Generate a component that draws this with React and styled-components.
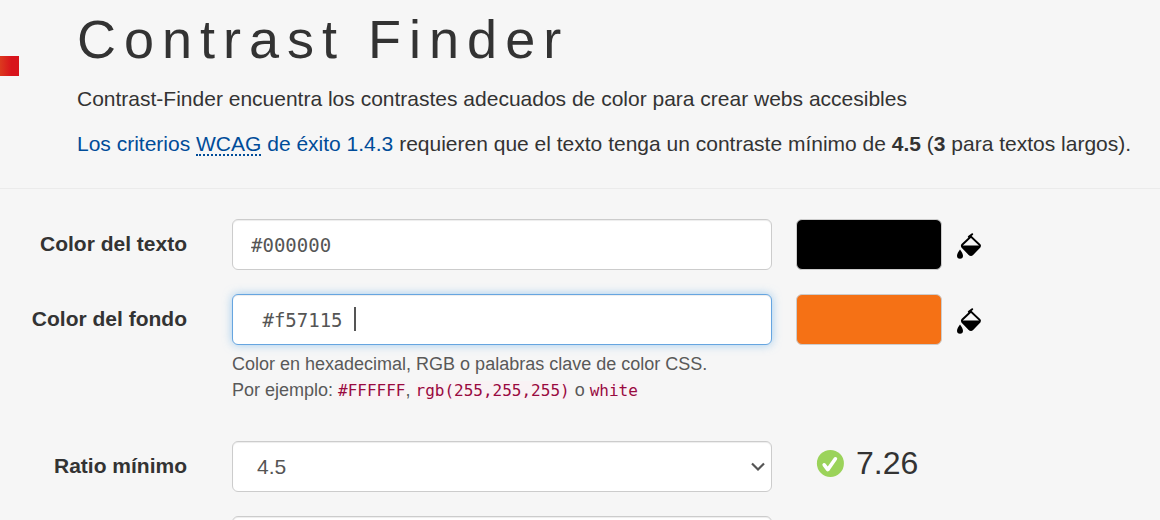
import React, { useState } from "react";
import styled, { createGlobalStyle, css } from "styled-components";

const GlobalStyle = createGlobalStyle`
  *, *::before, *::after { box-sizing: border-box; }
  html { scrollbar-width: none; }
  body {
    margin: 0;
    background: #f6f6f6;
    color: #333;
    font: 21px/30px "Liberation Sans", Arial, sans-serif;
  }
`;

const Header = styled.header`
  display: flex;
  align-items: flex-start;
  gap: 58px;
  padding-bottom: 29px;
  border-bottom: 1px solid #ebebeb;
`;

const LogoEdge = styled.div`
  flex: 0 0 19px;
  height: 20px;
  margin-top: 56px;
  background: linear-gradient(90deg, #dc3a1e, #d8141c 60%);
`;

const Intro = styled.div`
  flex: 1;
  min-width: 0;
`;

const Title = styled.h1`
  margin: 8px 0 14px;
  font-size: 54px;
  line-height: 62px;
  font-weight: 400;
  letter-spacing: 8px;
`;

const Lead = styled.p`
  margin: 0 0 15px;

  &:last-child { margin-bottom: 0; }
`;

const CriteriaLink = styled.a`
  color: #004c99;
  text-decoration: none;
`;

const Abbr = styled.abbr`
  display: inline-block;
  line-height: 20px;
  text-decoration: none;
  border-bottom: 2px dotted #004c99;
`;

const Form = styled.form`
  display: grid;
  gap: 24px;
  padding: 30px 0 24px;
`;

const Row = styled.div`
  display: grid;
  grid-template-columns: 232fr 540fr 388fr;
  align-items: start;
`;

const Label = styled.label`
  padding: 10px 45px 0 0;
  text-align: right;
  font-weight: 700;
`;

const Field = styled.div`
  position: relative;
  grid-column: 2;
`;

const control = css`
  display: block;
  width: 100%;
  height: 51px;
  border: 1px solid #ccc;
  border-radius: 6px;
  background-color: #fff;
  box-shadow: inset 0 1px 1px rgba(0, 0, 0, 0.075);
  color: #555;
  outline: none;
`;

const ColorInput = styled.input`
  ${control}
  padding: 0 18px;
  font: 19px "DejaVu Sans Mono", monospace;
  caret-color: transparent;

  ${(p) =>
    p.$active &&
    css`
      border-color: #66a5e0;
      box-shadow: inset 0 1px 1px rgba(0, 0, 0, 0.075), 0 0 10px rgba(102, 175, 233, 0.6);
    `}
`;

const Caret = styled.span`
  position: absolute;
  top: 13px;
  left: 122px;
  width: 2px;
  height: 24px;
  background: #555;
  pointer-events: none;
`;

const Select = styled.select`
  ${control}
  appearance: none;
  padding: 0 24px;
  font: 21px "Liberation Sans", Arial, sans-serif;
`;

const Chevron = styled.svg`
  position: absolute;
  top: 20px;
  right: 6px;
  width: 16px;
  height: 12px;
  pointer-events: none;
`;

const Help = styled.p`
  margin: 6px 0 14px;
  color: #595959;
  font-size: 18px;
  line-height: 26px;
`;

const Code = styled.code`
  color: #99093f;
  background: #f9f2f4;
  border-radius: 4px;
  font: 16px "DejaVu Sans Mono", monospace;
`;

const Aside = styled.div`
  display: flex;
  align-items: center;
  height: 51px;
  padding-left: 24px;
  gap: 14px;
`;

const Swatch = styled.div`
  width: 146px;
  height: 51px;
  border: 1px solid #ccc;
  border-radius: 6px;
`;

const PickButton = styled.button`
  display: flex;
  padding: 0;
  border: 0;
  background: none;
  color: #000;
  cursor: pointer;
`;

const Result = styled.output`
  display: flex;
  align-items: center;
  gap: 12px;
  padding: 0 0 8px 20px;
  font-size: 32px;
  line-height: 40px;
`;

function BucketIcon() {
  return (
    <svg width="28" height="28" viewBox="0 0 28 28" aria-hidden="true">
      <path d="M6.2 13.8 14.9 5.6 23.6 13.8 Q24.2 14.8 23.6 15.8 L16.4 23.2 Q14.9 24.4 13.4 23.2 L6.2 15.8 Q5.6 14.8 6.2 13.8Z" fill="none" stroke="currentColor" strokeWidth="2" />
      <path d="M5 14.6H24.8L16.6 23.9Q14.9 25.4 13.2 23.9Z" fill="currentColor" />
      <path d="M12.8 5.8 16.2 3.2" stroke="currentColor" strokeWidth="2" strokeLinecap="round" />
      <path d="M4 18.4C5.3 20.4 7 22.6 7 24.8A3 3 0 0 1 1 24.8C1 22.6 2.7 20.4 4 18.4Z" fill="currentColor" />
    </svg>
  );
}

function ValidIcon() {
  return (
    <svg width="28" height="28" viewBox="0 0 28 28" role="img" aria-label="Válido">
      <circle cx="14.4" cy="14.4" r="13.5" fill="#9bd35a" />
      <path d="M8.2 15.8 11.8 20.6 19.4 9.8" fill="none" stroke="#fff" strokeWidth="3.6" strokeLinecap="round" strokeLinejoin="round" />
    </svg>
  );
}

function SelectField({ id, options, ...rest }) {
  return (
    <Field>
      <Select id={id} {...rest}>
        {options.map((o) => (
          <option key={o}>{o}</option>
        ))}
      </Select>
      <Chevron viewBox="0 0 16 12" aria-hidden="true">
        <path d="M2 2.5 8 8.5 14 2.5" fill="none" stroke="#555" strokeWidth="2.2" />
      </Chevron>
    </Field>
  );
}

function ColorRow({ id, label, initial, active, help }) {
  const [value, setValue] = useState(initial);
  return (
    <Row>
      <Label htmlFor={id}>{label}</Label>
      <Field>
        <ColorInput id={id} type="text" value={value} $active={active} onChange={(e) => setValue(e.target.value)} />
        {active && <Caret />}
        {help}
      </Field>
      <Aside>
        <Swatch style={{ background: value.trim() }} />
        <PickButton type="button" aria-label={`Elegir ${label}`}>
          <BucketIcon />
        </PickButton>
      </Aside>
    </Row>
  );
}

export default function App() {
  return (
    <>
      <GlobalStyle />
      <Header>
        <LogoEdge />
        <Intro>
          <Title>Contrast Finder</Title>
          <Lead>Contrast-Finder encuentra los contrastes adecuados de color para crear webs accesibles</Lead>
          <Lead>
            <CriteriaLink href="#criterios">
              Los criterios <Abbr>WCAG</Abbr> de éxito 1.4.3
            </CriteriaLink>{" "}
            requieren que el texto tenga un contraste mínimo de <strong>4.5</strong> (<strong>3</strong> para textos
            largos).
          </Lead>
        </Intro>
      </Header>
      <Form>
        <ColorRow id="foreground" label="Color del texto" initial="#000000" />
        <ColorRow
          id="background"
          label="Color del fondo"
          initial=" #f57115 "
          active
          help={
            <Help>
              Color en hexadecimal, RGB o palabras clave de color CSS.
              <br />
              Por ejemplo: <Code>#FFFFFF</Code>, <Code>rgb(255,255,255)</Code> o <Code>white</Code>
            </Help>
          }
        />
        <Row>
          <Label htmlFor="ratio">Ratio mínimo</Label>
          <SelectField id="ratio" options={["4.5", "3", "7"]} />
          <Aside>
            <Result htmlFor="ratio">
              <ValidIcon />
              7.26
            </Result>
          </Aside>
        </Row>
        <Row>
          <SelectField id="component" aria-label="Componente" options={["Color del texto", "Color del fondo"]} />
        </Row>
      </Form>
    </>
  );
}
